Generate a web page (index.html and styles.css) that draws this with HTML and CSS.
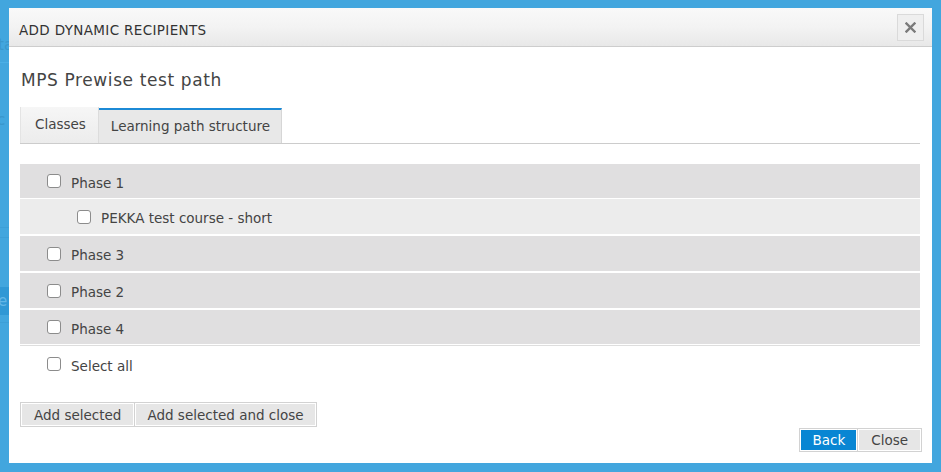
FILE: index.html
```html
<!DOCTYPE html>
<html>
<head>
<meta charset="utf-8">
<title>Add dynamic recipients</title>
<link rel="stylesheet" href="styles.css">
</head>
<body>
<div class="backdrop">
  <div class="bd-line bd-l1"></div>
  <div class="bd-text bd-t1">ta</div>
  <div class="bd-text bd-t2">c</div>
  <div class="bd-line bd-l2"></div>
  <div class="bd-line bd-l3"></div>
  <div class="bd-band">e</div>
  <div class="bd-line bd-l4"></div>
</div>
<div class="dialog">
  <div class="dialog-header">
    <span class="dialog-title">ADD DYNAMIC RECIPIENTS</span>
    <button class="icon-close" aria-label="Close">
      <svg width="11" height="11" viewBox="0 0 11 11"><path d="M1.5 1.5 L9.5 9.5 M9.5 1.5 L1.5 9.5" stroke="#7a7a7a" stroke-width="2.4" stroke-linecap="square"/></svg>
    </button>
  </div>
  <div class="dialog-body">
    <h2 class="path-title">MPS Prewise test path</h2>
    <div class="tabs">
      <div class="tab">Classes</div>
      <div class="tab active">Learning path structure</div>
    </div>
    <div class="tree">
      <label class="row phase first"><input type="checkbox"><span>Phase 1</span></label>
      <label class="row course"><input type="checkbox"><span>PEKKA test course - short</span></label>
      <label class="row phase"><input type="checkbox"><span>Phase 3</span></label>
      <label class="row phase"><input type="checkbox"><span>Phase 2</span></label>
      <label class="row phase last"><input type="checkbox"><span>Phase 4</span></label>
    </div>
    <label class="row select-all"><input type="checkbox"><span>Select all</span></label>
    <div class="btn-row">
      <button class="btn">Add selected</button>
      <button class="btn">Add selected and close</button>
    </div>
    <div class="footer">
      <button class="btn primary">Back</button>
      <button class="btn">Close</button>
    </div>
  </div>
</div>
</body>
</html>
```
FILE: styles.css
```css
html, body {
  margin: 0;
  padding: 0;
}
body {
  background: #42a6de;
  font-family: "DejaVu Sans", Verdana, sans-serif;
  font-size: 13.5px;
  color: #444;
  width: 941px;
  height: 472px;
  overflow: hidden;
  position: relative;
}

/* faint page behind the overlay */
.backdrop {
  position: absolute;
  left: 0;
  top: 0;
  width: 20px;
  height: 472px;
}
.bd-line {
  position: absolute;
  left: 0;
  width: 20px;
  height: 1px;
  background: #4bafe6;
}
.bd-l1 { top: 62px; }
.bd-l2 { top: 227px; background: #3d9fd7; }
.bd-l3 { top: 237px; background: #3d9fd7; }
.bd-l4 { top: 322px; background: #3d9fd7; }
.bd-text {
  position: absolute;
  left: -2px;
  color: #3a97cc;
  font-size: 15px;
}
.bd-t1 { top: 36px; }
.bd-t2 { top: 111px; left: -3px; }
.bd-band {
  position: absolute;
  top: 287px;
  left: 0;
  width: 20px;
  height: 28px;
  background: #3098d5;
  color: #62b6e6;
  font-size: 15px;
  line-height: 28px;
  text-indent: -2px;
}

.dialog {
  position: absolute;
  left: 9px;
  top: 8px;
  width: 923px;
  height: 455px;
  background: #fff;
  display: flex;
  flex-direction: column;
}

.dialog-header {
  height: 39px;
  border-bottom: 1px solid #cdcdcd;
  background: linear-gradient(#f9f9f9, #f3f3f3 50%, #e8e8e8);
  display: flex;
  align-items: center;
  justify-content: space-between;
  padding: 0 8px 0 10px;
}
.dialog-title {
  color: #333;
  font-size: 13.5px;
  letter-spacing: 0.35px;
  padding-top: 5px;
}
.icon-close {
  width: 27px;
  height: 27px;
  margin-top: 1px;
  border: 1px solid #dadada;
  background: #efefef;
  padding: 0;
  display: flex;
  align-items: center;
  justify-content: center;
}

.dialog-body {
  padding: 0 12px 11px 11px;
  display: flex;
  flex-direction: column;
}

.path-title {
  margin: 22px 0 18px 1px;
  height: 20px;
  line-height: 20px;
  font-size: 17px;
  font-weight: normal;
  color: #444;
  letter-spacing: 0.6px;
  padding-top: 1px;
}

.tabs {
  display: flex;
  height: 35px;
  border-bottom: 1px solid #cccccc;
}
.tab {
  box-sizing: border-box;
  height: 36px;
  margin-top: -1px;
  padding: 0 12px 0 14px;
  line-height: 35px;
  color: #444;
  background: linear-gradient(#f6f6f6, #ececec);
  border-left: 1px solid #e4e4e4;
  border-right: 1px solid #dcdcdc;
}
.tab.active {
  height: 35px;
  margin-top: 0;
  padding: 0 11px 0 12px;
  line-height: 33px;
  border-top: 2px solid #1c8ad6;
  border-left: 0;
  border-right: 1px solid #d6d6d6;
  background: #e8e8e8;
}

.tree {
  margin-top: 20px;
  border-bottom: 1px solid #dedede;
}
.row {
  display: flex;
  align-items: center;
  height: 35px;
  margin-bottom: 2px;
  padding-left: 27px;
  color: #444;
}
.row span {
  padding-top: 3px;
}
.row.phase { background: #e0dfe0; }
.row.course {
  background: #ececec;
  padding-left: 57px;
}
.row.first, .row.last {
  height: 34px;
  margin-bottom: 1px;
}
.row input {
  -webkit-appearance: none;
  appearance: none;
  box-sizing: border-box;
  width: 14px;
  height: 14px;
  margin: 0 10px 0 0;
  border: 1px solid #8c8c8c;
  border-radius: 3px;
  background: #fff;
}
.row.select-all {
  height: 36px;
  margin-bottom: 0;
}

.btn-row {
  display: flex;
  margin-top: 20px;
}
.btn {
  box-sizing: border-box;
  height: 25px;
  padding: 0 13px;
  border: 1px solid #d2d2d2;
  box-shadow: inset 0 0 0 1px #fff;
  background: #e6e6e6;
  color: #444;
  font-family: "DejaVu Sans", Verdana, sans-serif;
  font-size: 13.5px;
  margin: 0;
}
.btn + .btn {
  margin-left: -1px;
}
.btn-row .btn + .btn {
  padding: 0 12px;
}

.footer {
  display: flex;
  justify-content: flex-end;
  margin-top: 1px;
  margin-right: -2px;
}
.footer .btn {
  height: 24px;
  padding: 0 13px;
}
.footer .btn.primary {
  background: #0886d3;
  color: #fff;
  padding: 0 12px;
}
```
